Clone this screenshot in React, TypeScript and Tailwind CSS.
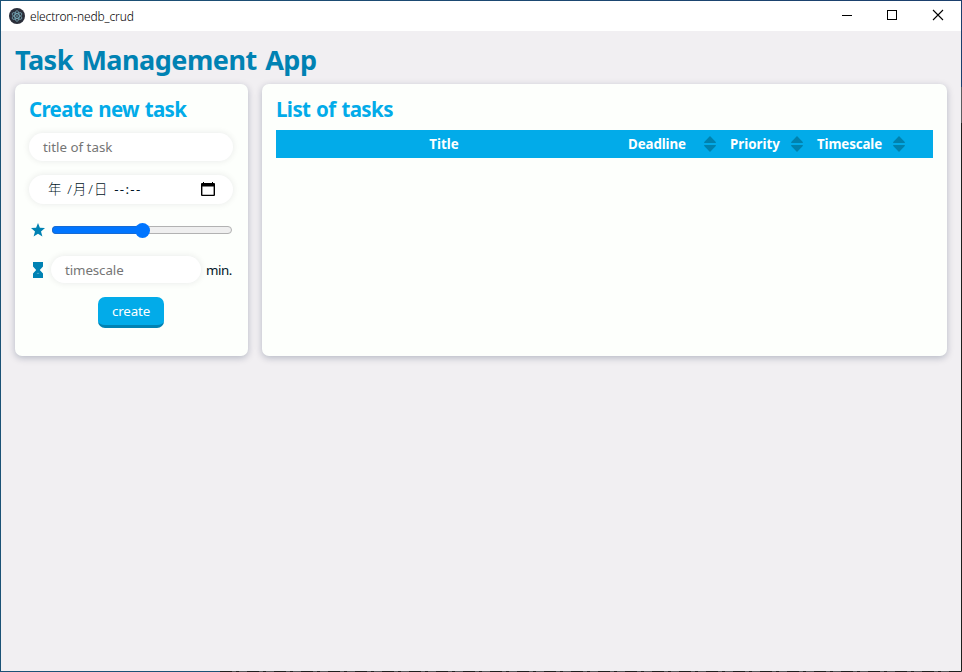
import React from "react";

const SortIcon = () => (
  <svg width="12" height="16" viewBox="0 0 12 16" className="block shrink-0 fill-[#0082ae]">
    <path d="M6 0 12 6.2Q12 7 11.2 7H.8Q0 7 0 6.2z" />
    <path d="M6 16 12 9.8Q12 9 11.2 9H.8Q0 9 0 9.8z" />
  </svg>
);

const ElectronIcon = () => (
  <svg width="16" height="16" viewBox="0 0 16 16" className="block">
    <circle cx="8" cy="8" r="8" fill="#2b2e3a" />
    <g fill="none" stroke="#9feaf9" strokeWidth=".65" opacity=".8">
      <ellipse cx="8" cy="8" rx="5.4" ry="2.2" transform="rotate(30 8 8)" />
      <ellipse cx="8" cy="8" rx="5.4" ry="2.2" transform="rotate(90 8 8)" />
      <ellipse cx="8" cy="8" rx="5.4" ry="2.2" transform="rotate(150 8 8)" />
    </g>
    <circle cx="8" cy="8" r=".7" fill="#9feaf9" />
  </svg>
);

function TitleBar() {
  return (
    <header className="flex h-[30px] items-center bg-white pl-2">
      <ElectronIcon />
      <span className="ml-[5px] pt-px text-[12px] font-light leading-4 tracking-[-0.15px] text-black">electron-nedb_crud</span>
      <div className="ml-auto flex h-full text-black">
        <svg width="46" height="30" shapeRendering="crispEdges"><path d="M18 14.5h10" stroke="currentColor" /></svg>
        <svg width="46" height="30" shapeRendering="crispEdges"><rect x="17.5" y="9.5" width="9" height="9" fill="none" stroke="currentColor" /></svg>
        <svg width="45" height="30"><path d="M17 9l10 10m0-10l-10 10" stroke="currentColor" strokeWidth="1.1" /></svg>
      </div>
    </header>
  );
}

const pill = "rounded-full bg-white shadow-[0_0_7px_rgba(0,0,30,0.09)]";
const card = "h-[272px] rounded-[7px] bg-[#fdfffc] px-[14px] shadow-[0_2px_7px_rgba(1,22,60,0.25)]";

function CreateForm() {
  return (
    <section className={card + " w-[233px] shrink-0"}>
      <h2 className="pt-[10px] text-[20.5px] font-bold leading-[30px] tracking-[-0.66px] [word-spacing:1px] text-[#02abe9]">
        <span>Create new task</span>
      </h2>
      <div className={pill + " mt-[9px] flex h-7 w-[204px] items-center px-[14px] pt-[2px] text-[13.33px] text-[#757575]"}>
        <span>title of task</span>
      </div>
      <div className={pill + " mt-[14px] flex h-[29px] w-[204px] items-center pl-[19px] pr-[18px] text-[13.33px] text-[#011627]"}>
        <span className="font-light">年</span>
        <span className="ml-[6px] font-light">/</span>
        <span className="ml-px font-light">月</span>
        <span className="ml-[2px] font-light">/</span>
        <span className="ml-px font-light">日</span>
        <span className="ml-[7px] tracking-[1.3px]">--:--</span>
        <svg className="ml-auto" width="14" height="15" viewBox="0 0 14 15">
          <path d="M2 0h1v1h8V0h1v1h1q1 0 1 1v11q0 1-1 1H1q-1 0-1-1V2q0-1 1-1h1zM1.4 4.5v8.2h11.2v-8.2z" fill="#000" fillRule="evenodd" />
        </svg>
      </div>
      <div className="mt-[18px] flex h-4 items-center pl-[2px]">
        <svg width="14" height="14" viewBox="0 0 14 14">
          <path d="M7 0l1.9 4.8L14 5.1 10 8.4 11.4 13.6 7 10.7 2.6 13.6 4 8.4 0 5.1l5.1-.3z" fill="#0082b3" />
        </svg>
        <div className="ml-[7px] flex h-2 w-[180px] items-center rounded-full border border-[#b2b2b2] bg-[#efefef]">
          <div className="-ml-px h-2 w-[90px] rounded-l-full border border-r-0 border-[#176bd4] bg-[#0075ff]" />
          <div className="-ml-[7px] size-[15px] shrink-0 rounded-full bg-[#0075ff]" />
        </div>
      </div>
      <div className="mt-[18px] flex h-[27px] items-center pl-1 text-[13.33px]">
        <svg width="10" height="16" viewBox="0 0 10 16">
          <path d="M0 0h10v4.5L6.8 8 10 11.5V16H0v-4.5L3.2 8 0 4.5z" fill="#0082b3" />
          <path d="M3.5 12 5 10.6l1.5 1.4z" fill="#4fa9c9" />
        </svg>
        <div className={pill + " ml-2 flex h-[27px] w-[150px] items-center pl-[14px] pt-[2px] text-[#757575]"}>
          <span className="tracking-[-0.1px]">timescale</span>
        </div>
        <span className="ml-[5px] pt-[2px] tracking-[-0.5px] text-[#011627]">min.</span>
      </div>
      <button className="ml-[69px] mt-[14px] block h-[31px] w-[66px] rounded-[7px] border-b-[3px] border-[#0082b3] bg-[#02abe9] text-[13.33px] leading-7 tracking-[-0.15px] text-white">
        <span>create</span>
      </button>
    </section>
  );
}

function TaskList() {
  return (
    <section className={card + " w-[685px]"}>
      <h2 className="pt-[10px] text-[20.5px] font-bold leading-[30px] tracking-[-0.6px] [word-spacing:1px] text-[#02abe9]">
        <span>List of tasks</span>
      </h2>
      <div className="mt-[6px] flex h-7 items-center bg-[#02abe9] text-[13.33px] font-bold text-white">
        <span className="w-[336px] pt-[2px] text-center">Title</span>
        <div className="ml-4 flex w-[88px] items-center justify-between"><span className="pt-[2px] tracking-[-0.1px]">Deadline</span><SortIcon /></div>
        <div className="ml-[14px] flex w-[73px] items-center justify-between"><span className="pt-[2px]">Priority</span><SortIcon /></div>
        <div className="ml-[14px] flex w-[88px] items-center justify-between"><span className="pt-[2px] tracking-[-0.12px]">Timescale</span><SortIcon /></div>
      </div>
    </section>
  );
}

export default function App() {
  return (
    <div className="flex h-[672px] w-[962px] flex-col font-['Noto_Sans','Noto_Sans_CJK_JP',sans-serif]">
      <div className="h-px shrink-0 bg-[linear-gradient(to_right,#1b5276,#1b3f6d)]" />
      <div className="flex h-[670px]">
        <div className="w-px bg-[#1b5276]" />
        <main className="w-[960px] bg-[#f1eff2]">
          <TitleBar />
          <div className="px-[14px]">
            <h1 className="pt-[9px] text-[27px] font-bold leading-[39px] tracking-[-0.5px] [word-spacing:2px] text-[#0082b3]">
              <span>Task Management App</span>
            </h1>
            <div className="mt-[5px] flex gap-[14px]">
              <CreateForm />
              <TaskList />
            </div>
          </div>
        </main>
        <div className="flex w-px flex-col">
          <div className="h-[86px] bg-[#1b3f6d]" />
          <div className="h-9 bg-[#5b5c60]" />
          <div className="grow bg-[#1e1e1e]" />
        </div>
      </div>
      <div className="flex h-px">
        <div className="w-[220px] bg-[#1b5276]" />
        <div className="grow bg-[repeating-linear-gradient(to_right,#1e1e1e_0_12px,#55565a_12px_16px,#1e1e1e_16px_19px,#55565a_19px_27px)]" />
      </div>
    </div>
  );
}
